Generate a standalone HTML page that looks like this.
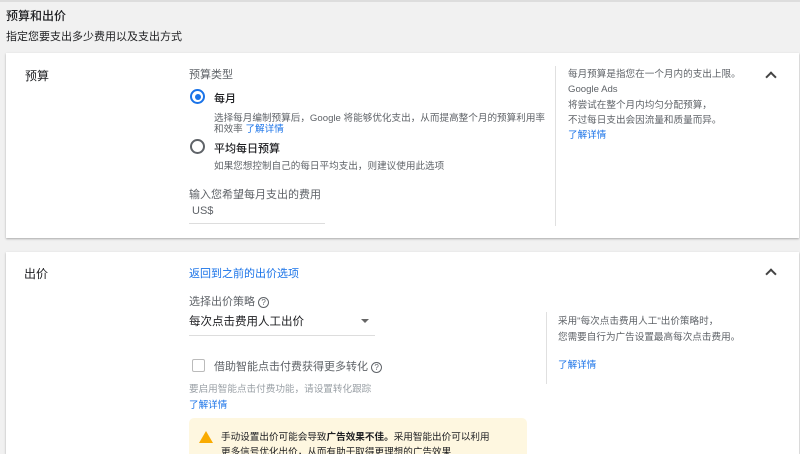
<!DOCTYPE html>
<html><head><meta charset="utf-8"><style>
*{margin:0;padding:0;box-sizing:border-box}
html,body{width:800px;height:454px;overflow:hidden}
body{background:#f1f1f1;font-family:"Liberation Sans","Noto Sans CJK SC",sans-serif;color:#202124;position:relative}
.a{position:absolute;white-space:nowrap}
.card{position:absolute;background:#fff;box-shadow:0 1px 2px rgba(0,0,0,.3)}
.g{color:#5f6368}
.l{color:#1a73e8}
.s{font-size:9.6px}
.m{font-size:11px}
.chev{position:absolute;width:8px;height:8px;border-left:2px solid #444;border-top:2px solid #444;transform:rotate(45deg)}
.q{display:inline-block;width:11px;height:11px;border:1.2px solid #5f6368;border-radius:50%;font-size:8px;line-height:9px;text-align:center;color:#5f6368;vertical-align:middle}
</style></head><body>
<div style="position:absolute;left:0;top:0;width:800px;height:2px;background:#ddd"></div>
<div class="a" style="left:6px;top:7px;font-size:12px;font-weight:500">预算和出价</div>
<div class="a m" style="left:6px;top:28px">指定您要支出多少费用以及支出方式</div>

<div class="card" style="left:6px;top:53px;width:793px;height:185px"></div>
<div class="a" style="left:25px;top:67px;font-size:12px">预算</div>
<div class="a m g" style="left:189px;top:66px">预算类型</div>
<div class="a" style="left:190px;top:89px;width:15px;height:15px;border:2px solid #1a73e8;border-radius:50%"><div style="margin:2.5px;width:6px;height:6px;border-radius:50%;background:#1a73e8"></div></div>
<div class="a" style="left:214px;top:90px;font-size:11px;font-weight:500">每月</div>
<div class="a s g" style="left:214px;top:110px">选择每月编制预算后，Google 将能够优化支出，从而提高整个月的预算利用率</div>
<div class="a s g" style="left:214px;top:121px">和效率 <span class="l">了解详情</span></div>
<div class="a" style="left:190px;top:139px;width:15px;height:15px;border:2px solid #5f6368;border-radius:50%"></div>
<div class="a" style="left:214px;top:140px;font-size:11px;font-weight:500">平均每日预算</div>
<div class="a s g" style="left:214px;top:158px">如果您想控制自己的每日平均支出，则建议使用此选项</div>
<div class="a m g" style="left:189px;top:186px">输入您希望每月支出的费用</div>
<div class="a m g" style="left:192px;top:205px">US$</div>
<div class="a" style="left:189px;top:223px;width:136px;height:1px;background:#ddd"></div>
<div class="a" style="left:555px;top:66px;width:1px;height:160px;background:#e0e0e0"></div>
<div class="a s g" style="left:568px;top:67px;line-height:15.3px">每月预算是指您在一个月内的支出上限。<br>Google Ads<br>将尝试在整个月内均匀分配预算，<br>不过每日支出会因流量和质量而异。<br><span class="l">了解详情</span></div>
<div class="chev" style="left:767px;top:73px"></div>

<div class="card" style="left:6px;top:252px;width:793px;height:202px"></div>
<div class="a" style="left:24px;top:265px;font-size:12px">出价</div>
<div class="a m l" style="left:189px;top:265px">返回到之前的出价选项</div>
<div class="a m g" style="left:189px;top:293px">选择出价策略 <span class="q">?</span></div>
<div class="a" style="left:189px;top:313px;font-size:11.5px">每次点击费用人工出价</div>
<div class="a" style="left:361px;top:319px;border-left:4px solid transparent;border-right:4px solid transparent;border-top:4px solid #666"></div>
<div class="a" style="left:189px;top:335px;width:186px;height:1px;background:#ddd"></div>
<div class="a" style="left:192px;top:359px;width:13px;height:13px;border:1.5px solid #bbb;border-radius:2px"></div>
<div class="a m g" style="left:214px;top:358px">借助智能点击付费获得更多转化 <span class="q">?</span></div>
<div class="a s" style="left:189px;top:381px;color:#9aa0a6">要启用智能点击付费功能，请设置转化跟踪</div>
<div class="a s l" style="left:189px;top:397px">了解详情</div>
<div class="a" style="left:189px;top:418px;width:338px;height:36px;background:#fef7e0;border-radius:5px 5px 0 0;overflow:hidden">
<div class="a" style="left:10px;top:13px;border-left:7px solid transparent;border-right:7px solid transparent;border-bottom:12px solid #f9ab00"></div>
<div class="a s" style="left:32px;top:12px;line-height:15px">手动设置出价可能会导致<b>广告效果不佳。</b>采用智能出价可以利用<br>更多信号优化出价，从而有助于取得更理想的广告效果</div>
</div>
<div class="a" style="left:546px;top:312px;width:1px;height:72px;background:#e0e0e0"></div>
<div class="a s g" style="left:558px;top:314px;line-height:16px">采用"每次点击费用人工"出价策略时，<br>您需要自行为广告设置最高每次点击费用。</div>
<div class="a s l" style="left:558px;top:357px">了解详情</div>
<div class="chev" style="left:767px;top:270px"></div>
</body></html>
